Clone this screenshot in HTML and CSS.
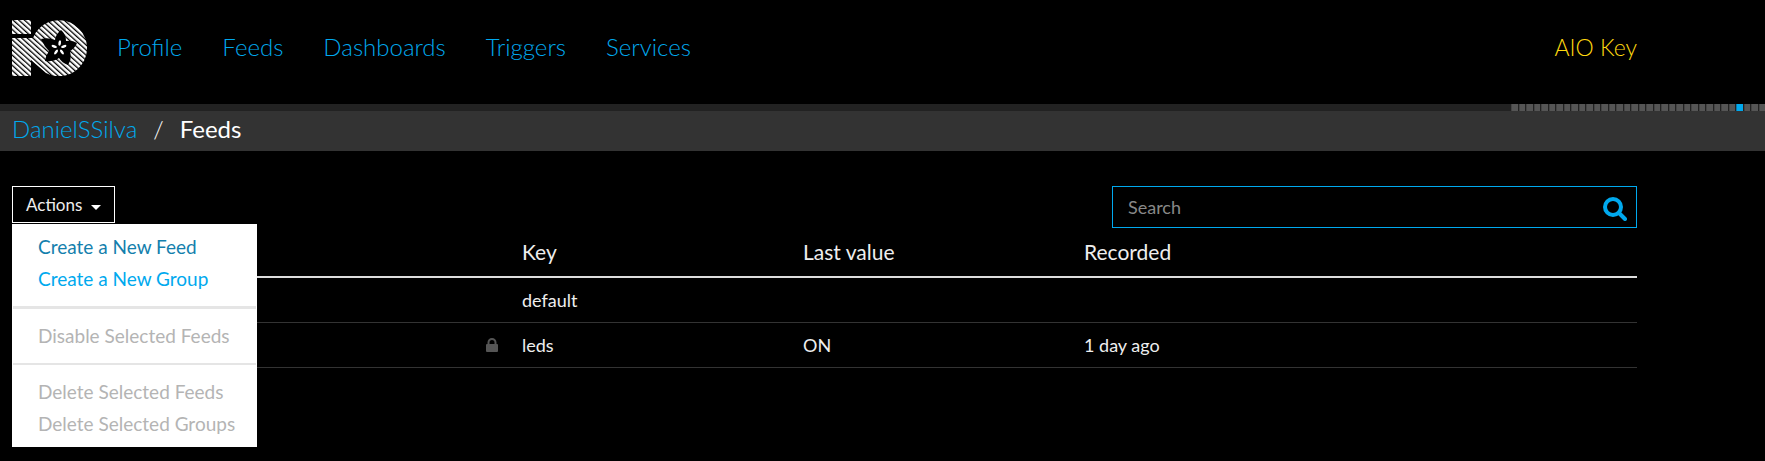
FILE: index.html
```html
<!DOCTYPE html>
<html lang="en">
<head>
<meta charset="utf-8">
<title>Feeds</title>
<link rel="stylesheet" href="styles.css">
</head>
<body>
<header class="site-header">
  <a class="logo" href="#" aria-label="IO home">
    <svg width="75" height="56" viewBox="0 0 75 56">
      <defs>
        <pattern id="stripes" width="8" height="3.800" patternUnits="userSpaceOnUse" patternTransform="rotate(42)">
          <rect width="8" height="2.500" fill="#fff"/>
        </pattern>
      </defs>
      <path fill="url(#stripes)" d="M0 0H19V14H0ZM0 18H21A28 28 0 1 1 34 53L19 40V56H0Z"/>
      <path d="M49 10Q54 14 54 21Q60 20 65 23Q63 28 58 31Q60 39 56 45Q50 43 47 38Q41 42 33 41Q34 35 37 31Q32 26 29 19Q36 17 43 20Q44 14 49 10Z"/>
      <g fill="#fff">
        <ellipse cx="47" cy="23" rx="1.300" ry="2.800" transform="rotate(8 47 28)"/>
        <ellipse cx="47" cy="23" rx="1.300" ry="2.800" transform="rotate(72 47 28)"/>
        <ellipse cx="47" cy="23" rx="1.300" ry="2.800" transform="rotate(144 47 28)"/>
        <ellipse cx="47" cy="23" rx="1.300" ry="2.800" transform="rotate(216 47 28)"/>
        <ellipse cx="47" cy="23" rx="1.300" ry="2.800" transform="rotate(288 47 28)"/>
      </g>
    </svg>
  </a>
  <nav class="main-nav">
    <a href="#">Profile</a>
    <a href="#">Feeds</a>
    <a href="#">Dashboards</a>
    <a href="#">Triggers</a>
    <a href="#">Services</a>
  </nav>
  <a class="aio-key" href="#">AIO Key</a>
</header>
<div class="activity">
  <div class="ticks">
    <i></i><i></i><i></i><i></i><i></i><i></i><i></i><i></i><i></i><i></i><i></i><i></i><i></i><i></i><i></i><i></i><i></i><i></i><i></i><i></i><i></i><i></i><i></i><i></i><i></i><i></i><i></i><i></i><i></i><i></i><i class="live"></i><i></i><i></i><i></i>
  </div>
</div>
<nav class="breadcrumb" aria-label="Breadcrumb">
  <a href="#">DanielSSilva</a>
  <span>/</span>
  <span class="current">Feeds</span>
</nav>
<main class="content">
  <div class="toolbar">
    <div class="dropdown">
      <button class="actions" type="button">Actions <span class="caret"></span></button>
      <ul class="menu">
        <li><a class="hover" href="#">Create a New Feed</a></li>
        <li><a href="#">Create a New Group</a></li>
        <li class="divider thick"></li>
        <li><a class="disabled" href="#">Disable Selected Feeds</a></li>
        <li class="divider"></li>
        <li><a class="disabled" href="#">Delete Selected Feeds</a></li>
        <li><a class="disabled" href="#">Delete Selected Groups</a></li>
      </ul>
    </div>
    <form class="search">
      <input type="text" placeholder="Search" aria-label="Search">
      <button type="button" aria-label="Search">
        <svg width="24" height="24" viewBox="0 0 24 24" fill="none" stroke="#00a9ee">
          <circle cx="10" cy="10" r="8" stroke-width="4"/>
          <path d="M16 16L22 22" stroke-width="4" stroke-linecap="round"/>
        </svg>
      </button>
    </form>
  </div>
  <table class="feeds">
    <colgroup><col class="c-name"><col class="c-lock"><col class="c-key"><col class="c-value"><col></colgroup>
    <thead>
      <tr><th></th><th></th><th>Key</th><th>Last value</th><th>Recorded</th></tr>
    </thead>
    <tbody>
      <tr><td></td><td></td><td>default</td><td></td><td></td></tr>
      <tr>
        <td></td>
        <td><svg class="lock" width="12" height="14" viewBox="0 0 12 14"><rect y="6" width="12" height="8" rx="1" fill="#555"/><path d="M2.500 7V4.500a3.500 3.500 0 0 1 7 0V7" fill="none" stroke="#555" stroke-width="2"/></svg></td>
        <td>leds</td><td>ON</td><td>1 day ago</td>
      </tr>
    </tbody>
  </table>
</main>
</body>
</html>
```
FILE: styles.css
```css
* { box-sizing: border-box; }
body {
  min-height: 100vh;
  margin: 0;
  background: #000;
  color: #eee;
  font: 18px/24px Lato, "Open Sans", sans-serif;
}
a { color: #00a9ee; text-decoration: none; }
.site-header {
  display: flex;
  align-items: flex-start;
  height: 104px;
  padding: 20px 128px 0 12px;
}
.logo { display: block; height: 56px; }
.main-nav { display: flex; gap: 40px; margin-left: 30px; }
.main-nav a, .aio-key, .breadcrumb { font-size: 24px; line-height: 32px; font-weight: 300; }
.main-nav, .aio-key { padding-top: 11px; }
.aio-key { margin-left: auto; color: #ffd90f; font-size: 23px; }
.activity { display: flex; justify-content: flex-end; height: 7px; background: #222; }
.ticks { display: flex; gap: 1px; width: 254px; }
.ticks i { flex: 1; background: #555; border-left: 1px solid #444; }
.ticks .live { background: #00a9ee; border-color: #0878a8; }
.breadcrumb { display: flex; gap: 16px; height: 40px; padding: 2px 12px; background: #333; color: #fff; }
.breadcrumb .current { font-weight: 400; }
.content { padding: 35px 128px 0 12px; }
.toolbar { display: flex; justify-content: space-between; align-items: flex-start; }
.dropdown { position: relative; }
.actions {
  display: flex;
  align-items: center;
  gap: 9px;
  height: 37px;
  padding: 0 13px;
  border: 1px solid #fff;
  background: #000;
  color: #eee;
  font: inherit;
  font-size: 17px;
}
.caret { margin-top: 5px; border: 5px solid transparent; border-top-color: #fff; border-bottom: 0; }
.menu {
  position: absolute;
  top: 38px;
  left: 0;
  width: 245px;
  margin: 0;
  padding: 7px 1px;
  background: #fff;
  font-size: 19px;
  list-style: none;
  white-space: nowrap;
}
.menu a { display: block; padding: 4px 25px; }
.menu .hover { color: #147fad; }
.menu .disabled { color: #b4b4b4; }
.divider { height: 2px; margin: 11px 0; background: #e5e5e5; }
.divider.thick { height: 3px; }
.search { display: flex; align-items: center; width: 525px; height: 42px; border: 1px solid #00a9ee; }
.search input { flex: 1; height: 40px; padding: 0 15px; border: 0; background: transparent; color: #eee; font: inherit; }
.search input::placeholder { color: #888; opacity: 1; }
.search button { display: flex; padding: 4px 9px 0 0; border: 0; background: transparent; }
.feeds { width: 100%; border-collapse: collapse; table-layout: fixed; text-align: left; }
.c-name { width: 474px; }
.c-lock { width: 36px; }
.c-key, .c-value { width: 281px; }
th { height: 49px; padding: 0; border-bottom: 2px solid #ddd; font-size: 21px; font-weight: 400; }
td { height: 45px; padding: 0; border-bottom: 1px solid #333; }
.lock { display: block; }
```
